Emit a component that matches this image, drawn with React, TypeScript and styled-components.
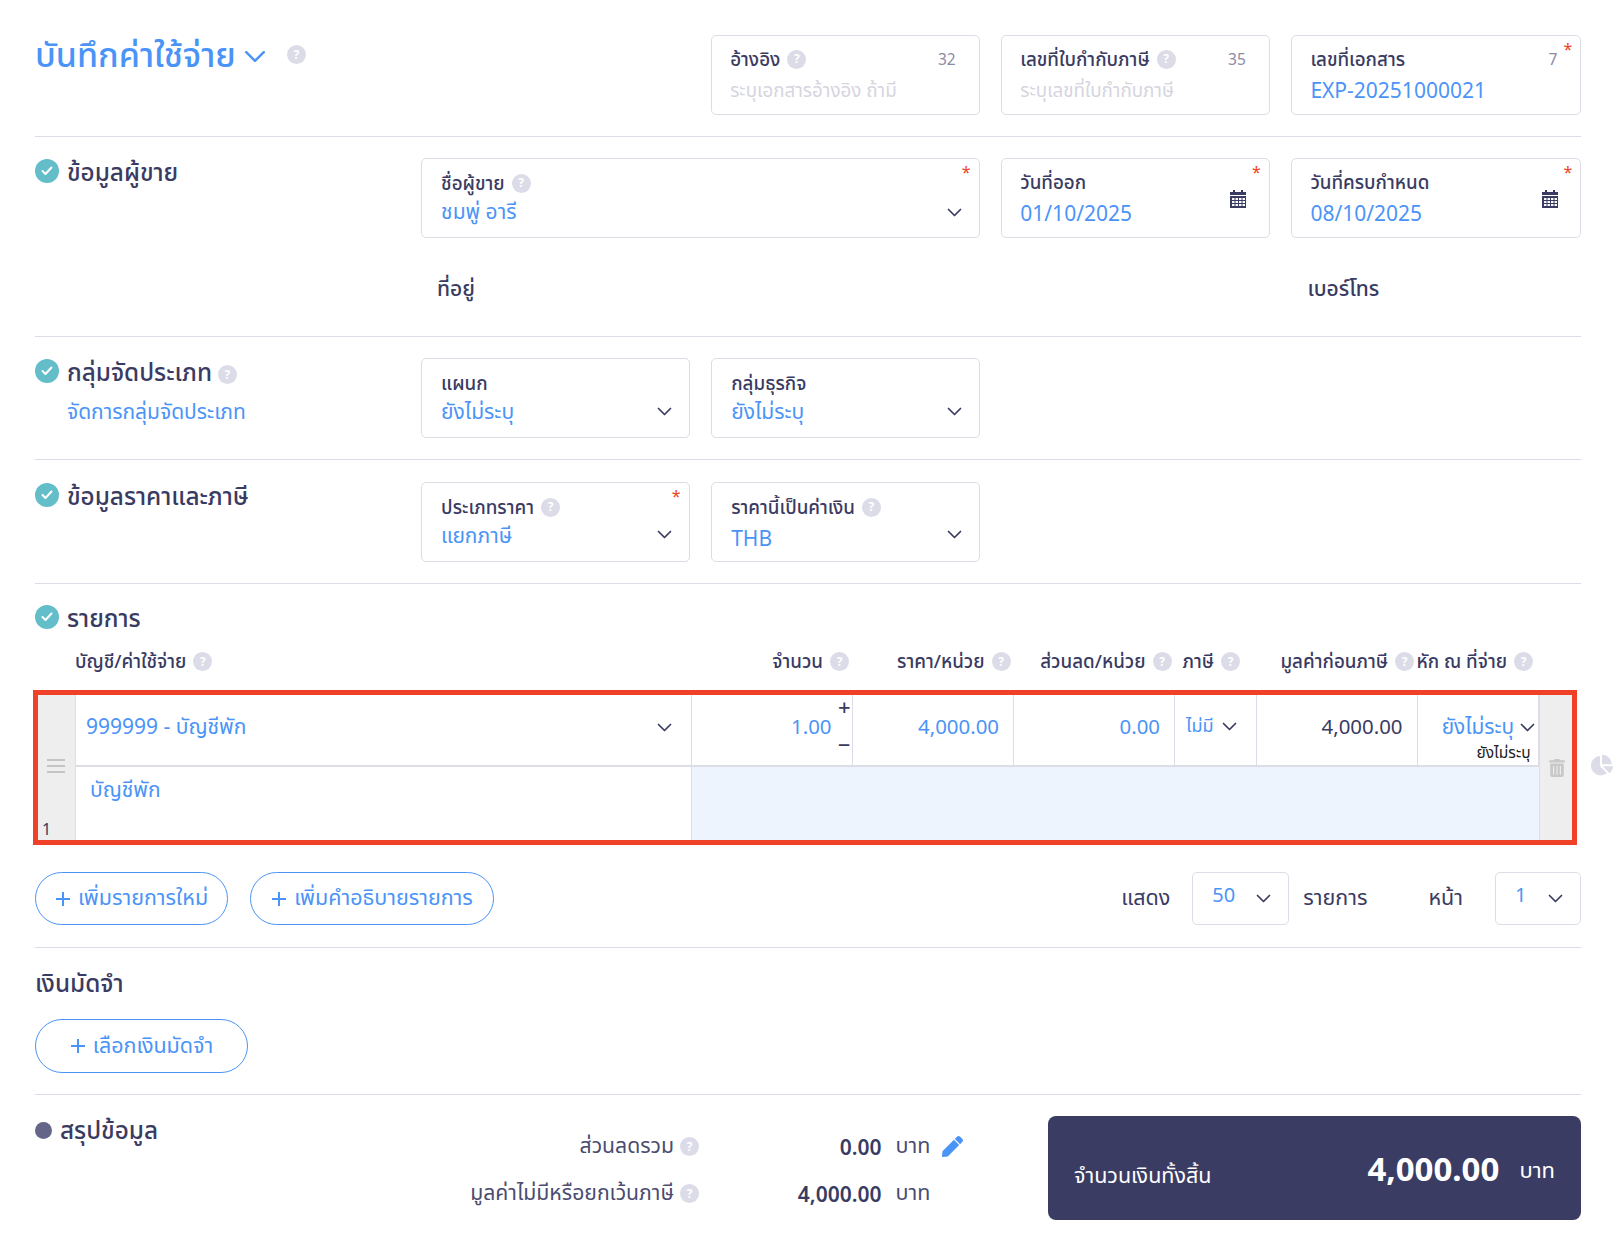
import React, {ReactElement} from 'react';
import styled, {createGlobalStyle} from 'styled-components';
import {FaChartPie, FaPen, FaTrashAlt} from 'react-icons/fa';

const ink = '#3a3b62';
const blue = '#4b94f7';
const line = '#dddde8';

const GlobalStyle = createGlobalStyle`
  html, body {
    margin: 0;
    padding: 0;
    background: #fff;
    overflow: hidden;
  }

  body {
    font-family: "Noto Sans", "Noto Sans Thai", "Open Sans", sans-serif;
    color: ${ink};
  }

  * {
    box-sizing: border-box;
  }
`;

const Page = styled.div`
  width: 1618px;
  height: 1238px;
  padding: 35px 37px 0 35px;
`;

const Section = styled.section<{height: number; top?: number}>`
  display: grid;
  grid-template-columns: 364.5px 268.5px 268.5px 268.5px 290px;
  column-gap: 21.6px;
  align-content: start;
  height: ${({height}) => height}px;
  padding-top: ${({top}) => top ?? 21}px;
`;

const Divider = styled.hr<{gap?: number}>`
  height: 1px;
  border: 0;
  margin: ${({gap}) => gap ?? 0}px 0 0;
  background: ${line};
`;

const Head = styled.div`
  display: flex;
  align-items: flex-start;
  gap: 21px;
  grid-column: 1 / span 2;

  & > span {
    margin-top: 10px;
  }
`;

const Title = styled.h1`
  display: flex;
  align-items: center;
  gap: 8px;
  margin: 0;
  font-size: 34px;
  line-height: 38px;
  font-weight: 500;
  color: ${blue};

  svg {
    margin-top: 6px;
  }
`;

const SectionTitle = styled.h2`
  margin: 0;
  font-size: 24.3px;
  line-height: 28px;
  font-weight: 500;
  color: ${ink};
`;

const Heading = styled.div`
  display: flex;
  flex-direction: column;
  grid-column: 1;
`;

const HeadingRow = styled.div`
  display: flex;
  align-items: center;
  align-self: start;
  gap: 8px;
`;

const Manage = styled.a`
  margin: 11px 0 0 32px;
  font-size: 21px;
  line-height: 28px;
  color: ${blue};
`;

const Tick = styled.span`
  display: flex;
  align-items: center;
  justify-content: center;
  width: 24px;
  height: 24px;
  margin-bottom: 3px;
  border-radius: 50%;
  background: #63bec9;
`;

const Dot = styled.span`
  width: 17px;
  height: 17px;
  border-radius: 50%;
  background: #65658a;
`;

const Help = styled.span`
  display: inline-flex;
  flex: none;
  align-items: center;
  justify-content: center;
  width: 19px;
  height: 19px;
  border-radius: 50%;
  background: #dcdce8;
  color: #fff;
  font-size: 12px;
  line-height: 1;
  font-weight: 700;
`;

const TitleHelp = styled(Help)`
  margin: 5px 0 0 -2px;
`;

const Field = styled.div<{span?: number; column?: number; compact?: boolean}>`
  position: relative;
  grid-column: ${({column}) => column ?? 'auto'} / span ${({span}) => span ?? 1};
  height: 80px;
  padding: ${({compact}) => (compact ? '11px 19px 0 18px' : '12px 19px 0 19px')};
  border: 1px solid ${line};
  border-radius: 5px;
`;

const FieldLabel = styled.div`
  display: flex;
  align-items: center;
  gap: 7px;
  font-size: 18.8px;
  line-height: 24px;
  font-weight: 500;
  color: ${ink};
`;

const FieldValue = styled.div<{latin?: boolean}>`
  margin-top: ${({latin}) => (latin ? 6 : 3)}px;
  font-size: 21px;
  line-height: 27px;
  color: ${blue};
`;

const Placeholder = styled.div`
  margin-top: 6px;
  font-size: 18.8px;
  line-height: 27px;
  color: #d5d5e0;
`;

const Counter = styled.span`
  position: absolute;
  top: 13px;
  right: 23px;
  font-size: 15.5px;
  line-height: 20px;
  color: #8b8ba3;
`;

const Required = styled.span`
  position: absolute;
  top: 3px;
  right: 8px;
  font-size: 16px;
  line-height: 20px;
  color: #ee4127;
`;

const FieldIcon = styled.span<{top: number; right: number}>`
  position: absolute;
  display: flex;
  top: ${({top}) => top}px;
  right: ${({right}) => right}px;
`;

const Caption = styled.div<{column: number; offset: number}>`
  grid-column: ${({column}) => column};
  margin: 36px 0 0 ${({offset}) => offset}px;
  font-size: 21px;
  line-height: 28px;
  font-weight: 500;
`;

const TableSection = styled.section`
  position: relative;
  padding-top: 20px;
`;

const TableHead = styled.div`
  display: grid;
  grid-template-columns: 40px 616px 161px 161.5px 161px 81.5px 161px 121px 35px;
  height: 29px;
  margin-top: 15px;
`;

const HeadCell = styled.div<{pad?: number; left?: boolean}>`
  display: flex;
  align-items: center;
  justify-content: ${({left}) => (left ? 'flex-start' : 'flex-end')};
  gap: 7px;
  padding-right: ${({pad}) => pad ?? 3}px;
  font-size: 18.8px;
  font-weight: 500;
  white-space: nowrap;
`;

const Table = styled.div`
  position: relative;
  display: grid;
  grid-template-columns: 38px 615.5px 161px 161.5px 161px 81.5px 161px 121px 33.5px;
  grid-template-rows: 72px 73px;
  width: 1544px;
  height: 155px;
  margin: 14px 0 0 -2px;
  border: 5px solid #ee4127;
`;

const Grip = styled.div`
  position: relative;
  grid-row: 1 / span 2;
  display: flex;
  flex-direction: column;
  align-items: center;
  justify-content: center;
  gap: 4px;
  padding: 0 2px 4px 0;
  background: #eeeeee;
  border-right: 1px solid ${line};

  i {
    width: 18px;
    height: 2px;
    background: #c4c4c4;
  }
`;

const RowIndex = styled.span`
  position: absolute;
  left: 4px;
  bottom: 0;
  font-size: 16px;
  line-height: 22px;
`;

const Cell = styled.div<{dark?: boolean}>`
  display: flex;
  align-items: center;
  justify-content: flex-end;
  padding: 0 14px 8px 0;
  border-right: 1px solid ${line};
  border-bottom: 2px solid ${line};
  font-size: 20.4px;
  color: ${({dark}) => (dark ? ink : blue)};
`;

const AccountCell = styled(Cell)`
  justify-content: space-between;
  padding: 0 19px 5px 10px;
  font-size: 21px;
`;

const QtyCell = styled(Cell)`
  position: relative;
  padding-right: 20px;
`;

const Stepper = styled.span<{top: number}>`
  position: absolute;
  right: 1px;
  top: ${({top}) => top}px;
  font-size: 22px;
  line-height: 22px;
  font-weight: 500;
  color: ${ink};
`;

const TaxCell = styled(Cell)`
  justify-content: flex-start;
  gap: 8px;
  padding: 0 11px 7px;
  font-size: 18px;
`;

const WhtCell = styled(Cell)`
  position: relative;
  padding: 0 3px 6px 0;
  font-size: 20.8px;
`;

const WhtNote = styled.span`
  position: absolute;
  right: 7px;
  bottom: 4px;
  font-size: 15.5px;
  line-height: 18px;
  color: #222;
`;

const Description = styled.div`
  padding: 6px 0 0 14px;
  border-right: 1px solid ${line};
  font-size: 21px;
  line-height: 32px;
  color: ${blue};
`;

const Empty = styled.div`
  grid-column: span 6;
  background: #edf4fe;
`;

const Trash = styled.div`
  grid-column: 9;
  grid-row: 1 / span 2;
  display: flex;
  align-items: center;
  justify-content: center;
  padding-left: 2px;
  background: #eeeeee;
  border-left: 1px solid ${line};
  color: #c8c8c8;
`;

const Pie = styled.span`
  position: absolute;
  display: flex;
  top: 59px;
  right: -41px;
  color: #dcdce8;
`;

const Actions = styled.div`
  display: flex;
  align-items: center;
  height: 53px;
  margin-top: 27px;
`;

const PillButton = styled.button<{width: number}>`
  display: flex;
  align-items: center;
  justify-content: center;
  gap: 7px;
  width: ${({width}) => width}px;
  height: 53px;
  margin-right: 22px;
  padding: 0;
  border: 1px solid ${blue};
  border-radius: 27px;
  background: #fff;
  font-family: inherit;
  font-size: 21.5px;
  color: ${blue};
`;

const Pager = styled.div`
  display: flex;
  align-items: center;
  margin-left: auto;
  font-size: 21.5px;
`;

const PagerText = styled.span<{gap: number}>`
  margin-right: ${({gap}) => gap}px;
`;

const PagerSelect = styled.div<{width: number; gap: number}>`
  display: flex;
  align-items: center;
  justify-content: space-between;
  width: ${({width}) => width}px;
  height: 53px;
  margin-right: ${({gap}) => gap}px;
  padding: 0 17px 0 19px;
  border: 1px solid ${line};
  border-radius: 5px;
  font-size: 20px;

  span {
    margin-top: -9px;
    color: ${blue};
  }
`;

const DepositSection = styled.section`
  height: 146px;
  padding-top: 21px;
`;

const DepositButton = styled(PillButton)`
  height: 54px;
  margin-top: 22px;
`;

const Summary = styled.section`
  display: grid;
  grid-template-columns: 1fr 533px;
  padding-top: 21px;
`;

const Totals = styled.div`
  display: grid;
  grid-template-columns: 330px 334px 182.5px 1fr;
  grid-auto-rows: 47px;
  align-items: center;
  align-content: start;
  padding-top: 7px;
  font-size: 21.2px;
`;

const SummaryHeading = styled(HeadingRow)`
  grid-row: 1 / span 2;
  margin-top: -7px;
`;

const TotalLabel = styled.div`
  display: flex;
  grid-column: 2;
  align-items: center;
  justify-content: flex-end;
  gap: 6px;
  color: #4b4c70;
  white-space: nowrap;
`;

const TotalAmount = styled.div`
  font-size: 21px;
  font-weight: 600;
  text-align: right;
`;

const TotalUnit = styled.div`
  display: flex;
  align-items: center;
  gap: 12px;
  padding-left: 14px;
  font-size: 21.5px;
  color: #4b4c70;
`;

const EditIcon = styled.span`
  display: flex;
  color: ${blue};
`;

const GrandTotal = styled.div`
  display: flex;
  align-items: center;
  height: 104px;
  padding: 0 26px;
  border-radius: 8px;
  background: #3b3c63;
  color: #fff;
`;

const GrandLabel = styled.span`
  margin-top: 16px;
  font-size: 21.5px;
`;

const GrandAmount = styled.span`
  margin: 0 20px 0 auto;
  font-size: 33px;
  font-weight: 700;
`;

const GrandUnit = styled.span`
  margin-top: 6px;
  font-size: 22px;
`;

function Chevron({size = 15, color = ink}: {size?: number; color?: string}): ReactElement {
  return (
    <svg width={size} height={size * 0.6} viewBox="0 0 15 9" fill="none">
      <path d="M1.5 1.5 7.5 7.5 13.5 1.5" stroke={color} strokeWidth="1.7" strokeLinecap="round" strokeLinejoin="round" />
    </svg>
  );
}

function Calendar(): ReactElement {
  return (
    <svg width="16" height="18" viewBox="0 0 16 18" fill={ink}>
      <rect x="3" y="0" width="2" height="3" />
      <rect x="11" y="0" width="2" height="3" />
      <path d="M0 2h16v3H0z" />
      <path fillRule="evenodd" d="M0 6h16v12H0z M2 8v2h2.5V8z M5.5 8v2H8V8z M9 8v2h2.5V8z M12.5 8v2H15V8z M2 11v2h2.5v-2z M5.5 11v2H8v-2z M9 11v2h2.5v-2z M12.5 11v2H15v-2z M2 14v2h2.5v-2z M5.5 14v2H8v-2z M9 14v2h2.5v-2z M12.5 14v2H15v-2z" />
    </svg>
  );
}

function CheckMark(): ReactElement {
  return (
    <svg width="12" height="10" viewBox="0 0 12 10" fill="none">
      <path d="M1.5 5 4.5 8 10.5 1.5" stroke="#fff" strokeWidth="2" strokeLinecap="round" strokeLinejoin="round" />
    </svg>
  );
}

function Plus(): ReactElement {
  return (
    <svg width="16" height="16" viewBox="0 0 16 16" stroke={blue} strokeWidth="2">
      <path d="M8 1v14M1 8h14" />
    </svg>
  );
}

export default function App(): ReactElement {
  return (
    <>
      <GlobalStyle />
      <Page>
        <Section height={101} top={0}>
          <Head>
            <Title>
              บันทึกค่าใช้จ่าย
              <Chevron size={22} color={blue} />
            </Title>
            <Help>?</Help>
          </Head>
          <Field column={3} compact>
            <FieldLabel>อ้างอิง <Help>?</Help></FieldLabel>
            <Placeholder>ระบุเอกสารอ้างอิง ถ้ามี</Placeholder>
            <Counter>32</Counter>
          </Field>
          <Field compact>
            <FieldLabel>เลขที่ใบกำกับภาษี <Help>?</Help></FieldLabel>
            <Placeholder>ระบุเลขที่ใบกำกับภาษี</Placeholder>
            <Counter>35</Counter>
          </Field>
          <Field compact>
            <FieldLabel>เลขที่เอกสาร</FieldLabel>
            <FieldValue latin>EXP-20251000021</FieldValue>
            <Counter>7</Counter>
            <Required>*</Required>
          </Field>
        </Section>
        <Divider />
        <Section height={199}>
          <Heading>
            <HeadingRow>
              <Tick><CheckMark /></Tick>
              <SectionTitle>ข้อมูลผู้ขาย</SectionTitle>
            </HeadingRow>
          </Heading>
          <Field span={2}>
            <FieldLabel>ชื่อผู้ขาย <Help>?</Help></FieldLabel>
            <FieldValue>ชมพู่ อารี</FieldValue>
            <Required>*</Required>
            <FieldIcon top={49} right={17}><Chevron /></FieldIcon>
          </Field>
          <Field compact>
            <FieldLabel>วันที่ออก</FieldLabel>
            <FieldValue latin>01/10/2025</FieldValue>
            <Required>*</Required>
            <FieldIcon top={31} right={23}><Calendar /></FieldIcon>
          </Field>
          <Field compact>
            <FieldLabel>วันที่ครบกำหนด</FieldLabel>
            <FieldValue latin>08/10/2025</FieldValue>
            <Required>*</Required>
            <FieldIcon top={31} right={22}><Calendar /></FieldIcon>
          </Field>
          <Caption column={2} offset={16}>ที่อยู่</Caption>
          <Caption column={5} offset={16}>เบอร์โทร</Caption>
        </Section>
        <Divider />
        <Section height={122}>
          <Heading>
            <HeadingRow>
              <Tick><CheckMark /></Tick>
              <SectionTitle>กลุ่มจัดประเภท</SectionTitle>
              <TitleHelp>?</TitleHelp>
            </HeadingRow>
            <Manage>จัดการกลุ่มจัดประเภท</Manage>
          </Heading>
          <Field>
            <FieldLabel>แผนก</FieldLabel>
            <FieldValue>ยังไม่ระบุ</FieldValue>
            <FieldIcon top={48} right={17}><Chevron /></FieldIcon>
          </Field>
          <Field>
            <FieldLabel>กลุ่มธุรกิจ</FieldLabel>
            <FieldValue>ยังไม่ระบุ</FieldValue>
            <FieldIcon top={48} right={17}><Chevron /></FieldIcon>
          </Field>
        </Section>
        <Divider />
        <Section height={123} top={22}>
          <Heading>
            <HeadingRow>
              <Tick><CheckMark /></Tick>
              <SectionTitle>ข้อมูลราคาและภาษี</SectionTitle>
            </HeadingRow>
          </Heading>
          <Field>
            <FieldLabel>ประเภทราคา <Help>?</Help></FieldLabel>
            <FieldValue>แยกภาษี</FieldValue>
            <Required>*</Required>
            <FieldIcon top={47} right={17}><Chevron /></FieldIcon>
          </Field>
          <Field>
            <FieldLabel>ราคานี้เป็นค่าเงิน <Help>?</Help></FieldLabel>
            <FieldValue latin>THB</FieldValue>
            <FieldIcon top={47} right={17}><Chevron /></FieldIcon>
          </Field>
        </Section>
        <Divider />
        <TableSection>
          <HeadingRow>
            <Tick><CheckMark /></Tick>
            <SectionTitle>รายการ</SectionTitle>
          </HeadingRow>
          <TableHead>
            <span />
            <HeadCell left>บัญชี/ค่าใช้จ่าย <Help>?</Help></HeadCell>
            <HeadCell>จำนวน <Help>?</Help></HeadCell>
            <HeadCell>ราคา/หน่วย <Help>?</Help></HeadCell>
            <HeadCell>ส่วนลด/หน่วย <Help>?</Help></HeadCell>
            <HeadCell pad={16}>ภาษี <Help>?</Help></HeadCell>
            <HeadCell>มูลค่าก่อนภาษี <Help>?</Help></HeadCell>
            <HeadCell pad={5}>หัก ณ ที่จ่าย <Help>?</Help></HeadCell>
          </TableHead>
          <Table>
            <Grip>
              <i /><i /><i />
              <RowIndex>1</RowIndex>
            </Grip>
            <AccountCell>
              999999 - บัญชีพัก
              <Chevron />
            </AccountCell>
            <QtyCell>
              1.00
              <Stepper top={0}>+</Stepper>
              <Stepper top={38}>−</Stepper>
            </QtyCell>
            <Cell>4,000.00</Cell>
            <Cell>0.00</Cell>
            <TaxCell>ไม่มี <Chevron /></TaxCell>
            <Cell dark>4,000.00</Cell>
            <WhtCell>
              ยังไม่ระบุ&nbsp;<Chevron />
              <WhtNote>ยังไม่ระบุ</WhtNote>
            </WhtCell>
            <Trash><FaTrashAlt size={18} /></Trash>
            <Description>บัญชีพัก</Description>
            <Empty />
            <Pie><FaChartPie size={22} /></Pie>
          </Table>
          <Actions>
            <PillButton width={193}><Plus /> เพิ่มรายการใหม่</PillButton>
            <PillButton width={244}><Plus /> เพิ่มคำอธิบายรายการ</PillButton>
            <Pager>
              <PagerText gap={22}>แสดง</PagerText>
              <PagerSelect width={97} gap={14}><span>50</span><Chevron /></PagerSelect>
              <PagerText gap={61}>รายการ</PagerText>
              <PagerText gap={32}>หน้า</PagerText>
              <PagerSelect width={86} gap={0}><span>1</span><Chevron /></PagerSelect>
            </Pager>
          </Actions>
        </TableSection>
        <Divider gap={22} />
        <DepositSection>
          <SectionTitle>เงินมัดจำ</SectionTitle>
          <DepositButton width={213}><Plus /> เลือกเงินมัดจำ</DepositButton>
        </DepositSection>
        <Divider />
        <Summary>
          <Totals>
            <SummaryHeading>
              <Dot />
              <SectionTitle>สรุปข้อมูล</SectionTitle>
            </SummaryHeading>
            <TotalLabel>ส่วนลดรวม <Help>?</Help></TotalLabel>
            <TotalAmount>0.00</TotalAmount>
            <TotalUnit>บาท <EditIcon><FaPen size={21} /></EditIcon></TotalUnit>
            <TotalLabel>มูลค่าไม่มีหรือยกเว้นภาษี <Help>?</Help></TotalLabel>
            <TotalAmount>4,000.00</TotalAmount>
            <TotalUnit>บาท</TotalUnit>
          </Totals>
          <GrandTotal>
            <GrandLabel>จำนวนเงินทั้งสิ้น</GrandLabel>
            <GrandAmount>4,000.00</GrandAmount>
            <GrandUnit>บาท</GrandUnit>
          </GrandTotal>
        </Summary>
      </Page>
    </>
  );
}
